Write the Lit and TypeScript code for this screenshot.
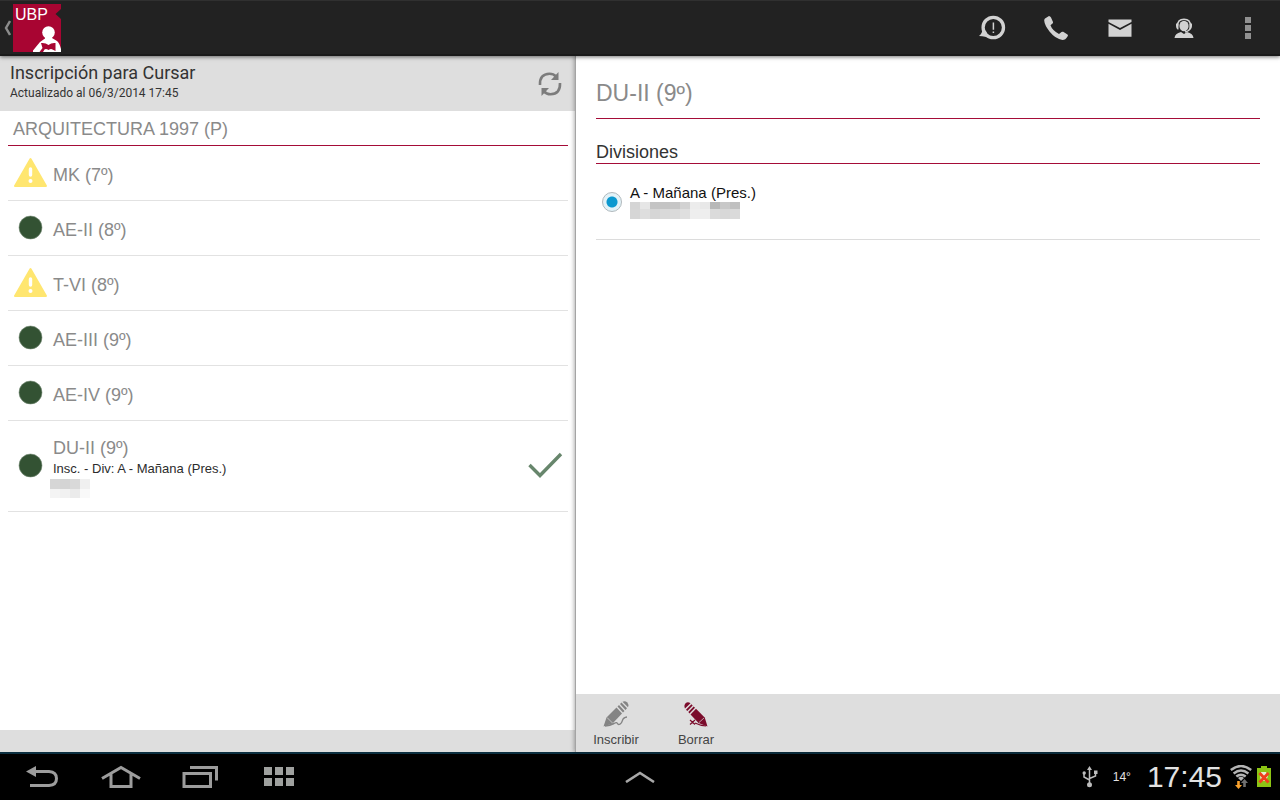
import { LitElement, html, css, svg } from "lit";
import { customElement, state } from "lit/decorators.js";

type Course = { name: string; status: "warn" | "ok"; note?: string };

const COURSES: Course[] = [
  { name: "MK (7º)", status: "warn" },
  { name: "AE-II (8º)", status: "ok" },
  { name: "T-VI (8º)", status: "warn" },
  { name: "AE-III (9º)", status: "ok" },
  { name: "AE-IV (9º)", status: "ok" },
  { name: "DU-II (9º)", status: "ok", note: "Insc. - Div: A - Mañana (Pres.)" },
];

// Grey levels of the blocks that cover private data, row by row.
const HIDDEN_SCHEDULE = { first: 10, second: 9, rows: [[214, 212, 217, 240], [244, 241, 235, 249]] };
const HIDDEN_TEACHER = {
  first: 7,
  second: 10,
  rows: [
    [213, 230, 196, 196, 198, 210, 236, 232, 184, 200, 192],
    [214, 222, 214, 217, 218, 223, 238, 238, 219, 216, 218],
  ],
};

function mosaic(m: { first: number; second: number; rows: number[][] }) {
  const w = m.rows[0].length * 10;
  return html`<svg class="mosaic" width=${w} height=${m.first + m.second} aria-hidden="true" shape-rendering="crispEdges">
    ${m.rows.map((row, r) =>
      row.map(
        (g, i) => svg`<rect x=${i * 10} y=${r ? m.first : 0} width="10" height=${r ? m.second : m.first} fill=${`rgb(${g},${g},${g})`} />`
      )
    )}
  </svg>`;
}

const logo = html`<svg width="48" height="48" viewBox="0 0 48 48">
  <path fill="#a80532" d="M0 0H48V5L42.500 10L48 15V48H0Z" />
  <text x="2" y="16" font-family="Liberation Sans" font-size="16" fill="#fff">UBP</text>
  <circle cx="35.500" cy="28.500" r="6.300" fill="#fff" />
  <path fill="#fff" d="M32 32H39V34L44 37Q46.500 39 48 45V48H20V46.500L27 38L32 34.500Z" />
  <path fill="#a80532" d="M28 39Q32.500 38.500 35.500 41Q38.500 38.500 42.500 39V47L39.500 45.500Q38 44.500 35.500 46Q33 44.500 31.500 45.500L30 48H26.500L29.500 44Z" />
</svg>`;

const warnIcon = html`<svg width="36" height="34" viewBox="0 0 36 34">
  <path fill="#ffe670" stroke="#ffe670" stroke-width="2" stroke-linejoin="round" d="M18.500 3L34 30H3Z" />
  <path stroke="#fff" stroke-width="3.400" stroke-linecap="round" d="M18.500 13V19" />
  <circle cx="18.500" cy="25" r="2" fill="#fff" />
</svg>`;

const okIcon = html`<svg width="36" height="34" viewBox="0 0 36 34">
  <circle cx="18.500" cy="16.500" r="11.500" fill="#335233" stroke="#7f937f" stroke-width=".6" />
</svg>`;

const checkIcon = html`<svg class="check" width="36" height="28" viewBox="0 0 36 28">
  <path fill="none" stroke="#67866c" stroke-width="3.400" d="M2.500 13L13 23.500L34 2" />
</svg>`;

const alertIcon = html`<svg width="28" height="28" viewBox="0 0 28 28">
  <circle cx="15.300" cy="13.500" r="10.200" fill="none" stroke="#d2d2d2" stroke-width="3.300" />
  <path fill="#d2d2d2" d="M4.500 14L8 17L11 23.500Q8 22.500 1 22Q4.500 19.500 4.500 14Z" />
  <path stroke="#d2d2d2" stroke-width="1.500" d="M15.400 8.500V15.800M15.400 17.500V19" />
</svg>`;

const phoneIcon = html`<svg width="28" height="28" viewBox="0 0 28 28">
  <path fill="#d2d2d2" d="M3 4.500L7 2Q8.200 2 9 3.500L11 8Q11.200 9 10.500 9.600L8.500 11.200Q10 16 17 20L19.500 18Q20.300 17.400 21.200 17.800L25.500 20.500Q26.500 21.400 25.500 22.500Q23.500 26 20.500 26Q13.500 25 7.500 17.500Q2.500 11 2.200 6.500Q2.300 5.200 3 4.500Z" />
</svg>`;

const mailIcon = html`<svg width="28" height="28" viewBox="0 0 28 28">
  <path fill="#d2d2d2" d="M2.500 5.500H25.500V8L14 14L2.500 8Z" />
  <path fill="#d2d2d2" d="M2.500 9.800L14 15.900L25.500 9.800V22.700H2.500Z" />
</svg>`;

const supportIcon = html`<svg width="28" height="28" viewBox="0 0 28 28">
  <ellipse cx="14" cy="12" rx="4.600" ry="5.300" fill="#d2d2d2" />
  <path fill="none" stroke="#d2d2d2" stroke-width="1.400" d="M7.500 12Q7.500 5.300 14 5.300T20.500 12Q20.500 17 15 18" />
  <path fill="#d2d2d2" d="M6 9.500H8.500V15.500H7.500Q6 14 6 12ZM19.500 9.500H22V12Q22 14 20.500 15.500H19.500Z" />
  <path fill="#d2d2d2" d="M4.500 24Q4.800 19.500 11 18L14 20L17 18Q23.200 19.500 23.500 24Z" />
</svg>`;

const moreIcon = html`<svg width="28" height="28" viewBox="0 0 28 28" shape-rendering="crispEdges">
  <path fill="#919191" d="M11 3H17V9H11ZM11 11H17V17H11ZM11 19H17V25H11Z" />
</svg>`;

const refreshIcon = html`<svg width="26" height="26" viewBox="0 0 26 26">
  <g fill="none" stroke="#7c7c7c" stroke-width="2.600">
    <path d="M3 14Q2.500 3 12.500 2.800Q16.500 2.800 19 5.500" />
    <path d="M23 12Q23.500 23 13.500 23.200Q9.500 23.200 7 20.500" />
  </g>
  <path fill="#7c7c7c" d="M21.500 1L21.500 9H14ZM4.500 25L4.500 17H12Z" />
</svg>`;

const pencilIcon = html`<svg width="28" height="28" viewBox="0 0 28 28">
  <g fill="#848484">
    <path d="M1.500 26.500L4.500 17.500L14.500 7.500L20 13.500L10.500 23.500Z" />
    <path d="M15.500 6.500L17 5L22.500 11L21 12.500ZM18 4L19.500 2.500L25 8.300L23.500 10Z" />
    <path d="M20.500 1.800Q23 .5 25.300 2.600Q27.300 5 26 7.300Z" />
  </g>
  <path stroke="#dedede" stroke-width=".7" d="M5 17.500L10.500 23" />
  <path fill="none" stroke="#848484" stroke-width="1.400" d="M3 26Q8 25.500 12 23.500C17 20.500 14 26 18 24.200C22 22 18.500 17.500 25 17" />
</svg>`;

const eraseIcon = html`<svg width="28" height="28" viewBox="0 0 28 28">
  <g fill="#7b0c2c">
    <path d="M25.500 26.500L22.700 17.500L14 8.800L8.500 14.500L16.500 23Z" />
    <path d="M13 7.800L11.700 6.500L6.300 12L7.500 13.500ZM10.700 5.500L9.400 4.200L4 9.700L5.300 11Z" />
    <path d="M8.500 3.300Q6 1.300 3.800 3Q1.500 5.300 3 8.500Z" />
  </g>
  <path stroke="#dedede" stroke-width=".7" d="M22 18L17 22.500" />
  <path fill="none" stroke="#7b0c2c" stroke-width="1.200" d="M8 20L13 24.500M13 20L8 24.500M13 23Q18 25.500 24 26" />
</svg>`;

const usbIcon = html`<svg width="16" height="22" viewBox="0 0 16 22">
  <g fill="none" stroke="#bdbdbd" stroke-width="1.500">
    <path d="M7.500 3V18M7.500 14L2 11V7.500M7.500 12.500L13.500 10V7" />
  </g>
  <path fill="#bdbdbd" d="M7.500 0L10 4H5ZM12 4.500H15.500V8H12Z" />
  <circle cx="2.200" cy="7" r="1.700" fill="#bdbdbd" />
  <circle cx="7.500" cy="18.800" r="2.500" fill="#bdbdbd" />
</svg>`;

const wifiIcon = html`<svg width="22" height="24" viewBox="0 0 22 24">
  <g fill="none" stroke="#b4b4b4" stroke-width="2.400">
    <path d="M.8 5Q11-3 21.200 5M3.600 8.500Q11 2.500 18.400 8.500M6.300 11.500Q11 7.800 15.700 11.500" />
  </g>
  <path fill="#b4b4b4" d="M8 13Q11 10.500 14 13L11 16Z" />
  <path fill="#f9a12c" d="M7.200 16H9.800V20H12L8.500 24L5 20H7.200Z" />
  <path fill="#707070" d="M13.200 22H15.800V18H18L14.500 14L11 18H13.200Z" />
</svg>`;

const batteryIcon = html`<svg width="14" height="22" viewBox="0 0 14 22">
  <path fill="#8cc414" d="M4 0H10V2H14V21H0V2H4Z" />
  <path fill="#e9f2d0" d="M4 6H9L11 10L9 15H4L3 10Z" />
  <path stroke="#f0401c" stroke-width="3" d="M2.500 7L11.500 16.500M11.500 7L2.500 16.500" />
</svg>`;

@customElement("app-root")
export class AppRoot extends LitElement {
  @state() private division = "A";

  static styles = css`
    :host {
      display: flex;
      flex-direction: column;
      min-height: 100vh;
      background: #fff;
      color: #222;
      font-family: "Liberation Sans", Arial, sans-serif;
    }
    * {
      box-sizing: border-box;
    }
    button {
      border: 0;
      padding: 0;
      background: none;
      color: inherit;
      font: inherit;
      display: flex;
      align-items: center;
      justify-content: center;
      cursor: pointer;
    }
    svg {
      display: block;
      flex: none;
    }
    h1,
    h2,
    h3,
    p,
    ul {
      margin: 0;
      padding: 0;
      font-weight: 400;
      list-style: none;
    }
    .topbar {
      height: 56px;
      display: flex;
      justify-content: space-between;
      background: #222;
      border-top: 1px solid #303030;
      border-bottom: 2px solid #1a1a1a;
      box-shadow: 0 1px 4px rgba(0, 0, 0, 0.55);
      z-index: 2;
    }
    .home {
      gap: 2px;
      padding-left: 4px;
    }
    .actions {
      display: flex;
    }
    .actions button {
      width: 64px;
    }
    .main {
      flex: 1;
      display: flex;
    }
    .list-pane {
      width: 45%;
      display: flex;
      flex-direction: column;
    }
    .detail-pane {
      flex: 1;
      display: flex;
      flex-direction: column;
      margin-left: -1px;
      border-left: 1px solid #a4a4a4;
      background: #fff;
      box-shadow: -1px 0 4px rgba(0, 0, 0, 0.3);
      z-index: 1;
    }
    .pane-head {
      height: 55px;
      display: flex;
      align-items: center;
      justify-content: space-between;
      padding: 0 13px 0 10px;
      background: #dedede;
      font-family: Roboto, sans-serif;
      color: #333;
    }
    .pane-heading {
      padding-bottom: 4px;
    }
    .pane-title {
      font-size: 18px;
      line-height: 22px;
    }
    .updated {
      font-size: 12px;
      line-height: 18px;
    }
    .list {
      flex: 1;
      padding: 0 8px;
      color: #8a8a8a;
    }
    .career {
      height: 35px;
      padding-left: 5px;
      border-bottom: 1px solid #a50c38;
      font-size: 18px;
      line-height: 36px;
    }
    .row {
      width: 100%;
      min-height: 55px;
      padding: 0 5px 0 4px;
      border-bottom: 1px solid #e2e2e2;
      text-align: left;
    }
    .row.tall {
      min-height: 91px;
    }
    .row-text {
      flex: 1;
      padding: 3px 0 0 5px;
      font-size: 18px;
      line-height: 22px;
    }
    .note {
      display: block;
      font-size: 13px;
      line-height: 20px;
      color: #2c2c2c;
    }
    .pane-foot {
      height: 22px;
      background: #dedede;
    }
    .detail {
      flex: 1;
      padding: 16px 20px;
    }
    .detail-title {
      height: 47px;
      border-bottom: 1px solid #a50c38;
      color: #8a8a8a;
      font-size: 23px;
      line-height: 43px;
    }
    .section {
      margin-top: 22px;
      height: 23px;
      border-bottom: 1px solid #a50c38;
      font-size: 18px;
      line-height: 22px;
      color: #333;
    }
    .option {
      height: 76px;
      display: flex;
      align-items: center;
      gap: 8px;
      padding-left: 6px;
      border-bottom: 1px solid #dcdcdc;
      font-size: 15px;
      line-height: 18px;
      color: #111;
    }
    .radio {
      appearance: none;
      width: 20px;
      height: 20px;
      margin: 0;
      border: 1px solid #b0b8bc;
      border-radius: 50%;
      background: #e6f3f8;
    }
    .radio:checked {
      background: radial-gradient(circle, #0a98cf 5px, #e2f2f8 6px);
    }
    .toolbar {
      height: 58px;
      display: flex;
      background: #dedede;
      font-size: 13px;
      line-height: 20px;
      color: #444;
    }
    .toolbar button {
      width: 80px;
      padding-top: 4px;
      flex-direction: column;
      gap: 2px;
    }
    .navbar {
      height: 48px;
      display: grid;
      grid-template-columns: 1fr auto 1fr;
      background: #000;
      border-top: 2px solid #0b2f40;
    }
    .keys {
      display: flex;
      padding-left: 2px;
    }
    .keys button {
      width: 79px;
    }
    .status {
      display: flex;
      align-items: center;
      justify-content: flex-end;
      padding-right: 9px;
      color: #e2e2e2;
    }
    .temp {
      padding: 0 16px 0 15px;
      font-family: "Liberation Sans Narrow", "Liberation Sans", sans-serif;
      font-size: 12px;
    }
    .clock {
      font-size: 30px;
      line-height: 32px;
      padding-right: 8px;
    }
    .battery {
      padding-left: 5px;
    }
    .mosaic-note {
      display: block;
      margin-left: -3px;
    }
  `;

  private row(c: Course) {
    return html`<li>
      <button class="row ${c.note ? "tall" : ""}">
        ${c.status === "warn" ? warnIcon : okIcon}
        <span class="row-text">
          ${c.name}
          ${c.note ? html`<span class="note">${c.note}</span><span class="mosaic-note">${mosaic(HIDDEN_SCHEDULE)}</span>` : ""}
        </span>
        ${c.note ? checkIcon : ""}
      </button>
    </li>`;
  }

  render() {
    return html`
      <header class="topbar">
        <button class="home" aria-label="Volver">
          <svg width="7" height="16" viewBox="0 0 7 16"><path fill="none" stroke="#8c8c8c" stroke-width="2.400" d="M6 1L2 8L6 15" /></svg>
          ${logo}
        </button>
        <nav class="actions">
          <button aria-label="Avisos">${alertIcon}</button>
          <button aria-label="Teléfono">${phoneIcon}</button>
          <button aria-label="Correo">${mailIcon}</button>
          <button aria-label="Soporte">${supportIcon}</button>
          <button aria-label="Más opciones">${moreIcon}</button>
        </nav>
      </header>
      <main class="main">
        <section class="list-pane">
          <div class="pane-head">
            <div class="pane-heading">
              <h1 class="pane-title">Inscripción para Cursar</h1>
              <p class="updated">Actualizado al 06/3/2014 17:45</p>
            </div>
            <button aria-label="Actualizar">${refreshIcon}</button>
          </div>
          <div class="list">
            <h2 class="career">ARQUITECTURA 1997 (P)</h2>
            <ul>
              ${COURSES.map((c) => this.row(c))}
            </ul>
          </div>
          <div class="pane-foot"></div>
        </section>
        <section class="detail-pane">
          <div class="detail">
            <h2 class="detail-title">DU-II (9º)</h2>
            <h3 class="section">Divisiones</h3>
            <label class="option">
              <input class="radio" type="radio" name="division" .checked=${this.division === "A"} @change=${() => (this.division = "A")} />
              <span>A - Mañana (Pres.)${mosaic(HIDDEN_TEACHER)}</span>
            </label>
          </div>
          <div class="toolbar">
            <button>${pencilIcon}Inscribir</button>
            <button>${eraseIcon}Borrar</button>
          </div>
        </section>
      </main>
      <footer class="navbar">
        <div class="keys">
          <button aria-label="Atrás">
            <svg width="34" height="24" viewBox="0 0 34 24">
              <path fill="none" stroke="#9c9c9c" stroke-width="3" d="M9 6.500H24Q31.500 7 31.500 13.500T24 20.500H5" />
              <path fill="#9c9c9c" d="M1 6.500L11 1V12Z" />
            </svg>
          </button>
          <button aria-label="Inicio">
            <svg width="40" height="24" viewBox="0 0 40 24">
              <path fill="none" stroke="#9c9c9c" stroke-width="3" d="M1 13.500L20 2.500L39 13.500M10 9V21.500H30V9" />
            </svg>
          </button>
          <button aria-label="Recientes">
            <svg width="36" height="24" viewBox="0 0 36 24">
              <path fill="none" stroke="#9c9c9c" stroke-width="3" d="M2 8.500H28.500V21.500H2ZM8 2.500H34.500V15.500" />
            </svg>
          </button>
          <button aria-label="Aplicaciones">
            <svg width="30" height="20" viewBox="0 0 30 20">
              <path fill="#9fa19f" d="M0 0H8V8H0ZM11 0H19V8H11ZM22 0H30V8H22ZM0 11H8V19H0ZM11 11H19V19H11ZM22 11H30V19H22Z" />
            </svg>
          </button>
        </div>
        <button aria-label="Abrir panel">
          <svg width="30" height="12" viewBox="0 0 30 12"><path fill="none" stroke="#a8a8a8" stroke-width="2.600" d="M1 11L15 2L29 11" /></svg>
        </button>
        <div class="status">
          ${usbIcon}
          <span class="temp">14°</span>
          <span class="clock">17:45</span>
          ${wifiIcon}
          <span class="battery">${batteryIcon}</span>
        </div>
      </footer>
    `;
  }
}
